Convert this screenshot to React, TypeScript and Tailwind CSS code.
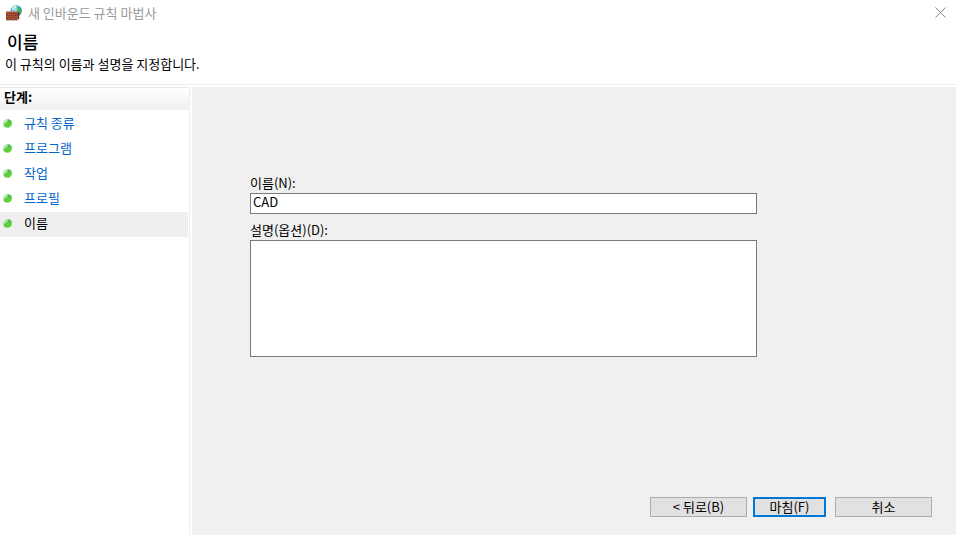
import React from 'react';

const steps = ['규칙 종류', '프로그램', '작업', '프로필', '이름'];
const currentStep = 4;

const FirewallIcon: React.FC = () => (
  <svg width="16" height="16" viewBox="0 0 16 16" aria-hidden="true">
    <defs>
      <radialGradient id="globe" cx="0.4" cy="0.35" r="0.7">
        <stop offset="0" stopColor="#b4ebff" />
        <stop offset="0.55" stopColor="#3a9ee8" />
        <stop offset="1" stopColor="#1650ac" />
      </radialGradient>
    </defs>
    <circle cx="10.2" cy="5.8" r="5.6" fill="url(#globe)" />
    <path d="M6.6 2.2 8.8.8l2 .2-.8 1.6-1.8.8-.8 1.6-1.6.2z" fill="#d6f2e2" />
    <path d="M11.6 1.2l2.2 1.2 1.4 2.4-.2 2.4-1.4 1.8-1.2-2-1.2-1.4.6-1.8z" fill="#45bb3c" />
    <path d="M0 6.4h11.4v8.8H0z" fill="#b05a40" />
    <path d="M11.4 6.4l1.8.8v6l-1.8 2z" fill="#6b2a1c" />
    <path d="M0 6.4h11.4l1.4.6H0z" fill="#cf9880" />
    <path
      d="M0 8.5h11.4M0 10.5h11.4M0 12.5h11.4M0 14.8h11.4M3.5 7v1.5M7.5 7v1.5M1.5 8.5v2M5.5 8.5v2M9.5 8.5v2M3.5 10.5v2M7.5 10.5v2M1.5 12.5v2M5.5 12.5v2M9.5 12.5v2"
      stroke="#76301f"
      strokeWidth="0.6"
      fill="none"
    />
  </svg>
);

const StepDot: React.FC = () => (
  <svg width="10" height="10" viewBox="0 0 10 10" className="shrink-0" aria-hidden="true">
    <defs>
      <linearGradient id="dot" x1="0" y1="0" x2="0.7" y2="0.7">
        <stop offset="0" stopColor="#e6f3e4" />
        <stop offset="0.45" stopColor="#b4e2b0" />
        <stop offset="0.65" stopColor="#5ccb44" />
        <stop offset="1" stopColor="#62d038" />
      </linearGradient>
    </defs>
    <ellipse cx="5.4" cy="5.4" rx="4.5" ry="4.3" fill="url(#dot)" />
    <path d="M5.6 1.3c2 .1 3.6 1.3 4 3L6.4 5.2z" fill="#4cc247" />
  </svg>
);

const App: React.FC = () => {
  return (
    <div className="flex min-h-screen flex-col bg-white font-['Noto_Sans_CJK_KR',sans-serif] text-[13px] leading-4 text-black">
      {/* Title bar */}
      <div className="flex h-[27px] items-center pb-0.5 pl-1.5 pr-2">
        <FirewallIcon />
        <span className="ml-1.5 flex-1 text-[#999999]">새 인바운드 규칙 마법사</span>
        <button type="button" aria-label="닫기" className="p-0.5">
          <svg width="11" height="11" viewBox="0 0 11 11" aria-hidden="true">
            <path d="M.5.5l10 10M10.5.5l-10 10" stroke="#868686" fill="none" />
          </svg>
        </button>
      </div>

      {/* Header */}
      <header className="h-[58px] border-b border-[#ebebeb] pl-[5px] pt-[5px]">
        <h1 className="pl-0.5 text-[17px] font-medium leading-5">이름</h1>
        <p className="mt-1">이 규칙의 이름과 설명을 지정합니다.</p>
      </header>

      <div className="mt-0.5 flex flex-1">
        {/* Steps */}
        <nav aria-label="단계" className="mr-0.5 w-[190px] shrink-0 border-r border-t border-[#ebebeb]">
          <h2 className="bg-linear-to-b from-white to-[#efefef] pb-[5px] pl-1 pt-px font-bold">단계:</h2>
          <ul className="mr-px mt-0.5">
            {steps.map((step, index) => (
              <li
                key={step}
                className={`flex h-[25px] items-center pb-[3px] pl-0.5 ${index === currentStep ? 'bg-[#efefef]' : ''}`}
              >
                <StepDot />
                {index === currentStep ? (
                  <span aria-current="step" className="ml-3">{step}</span>
                ) : (
                  <a href="#" className="ml-3 text-[#0066cc]">{step}</a>
                )}
              </li>
            ))}
          </ul>
        </nav>

        {/* Page */}
        <form className="flex flex-1 flex-col bg-[#f0f0f0]" onSubmit={(e) => e.preventDefault()}>
          <div className="flex flex-1 flex-col pl-[58px] pr-[199px] pt-[88px]">
            <label htmlFor="rule-name">이름(N):</label>
            <input
              id="rule-name"
              type="text"
              defaultValue="CAD"
              className="mt-0.5 h-[21px] border border-[#7a7a7a] bg-white pb-1 pl-0.5 outline-none"
            />
            <label htmlFor="rule-description" className="mt-2">설명(옵션)(D):</label>
            <textarea
              id="rule-description"
              className="mt-0.5 h-[117px] resize-none border border-[#7a7a7a] bg-white px-0.5 outline-none"
            />
          </div>
          <div className="flex justify-end pb-[18px] pr-6">
            <button type="button" className="h-5 w-[97px] border border-[#adadad] bg-[#e1e1e1]">
              &lt; 뒤로(B)
            </button>
            <button type="submit" className="ml-1.5 h-5 w-[73px] border-2 border-[#0078d7] bg-[#e1e1e1]">
              마침(F)
            </button>
            <button type="button" className="ml-[9px] h-5 w-[97px] border border-[#adadad] bg-[#e1e1e1]">
              취소
            </button>
          </div>
        </form>
      </div>
    </div>
  );
};

export default App;
